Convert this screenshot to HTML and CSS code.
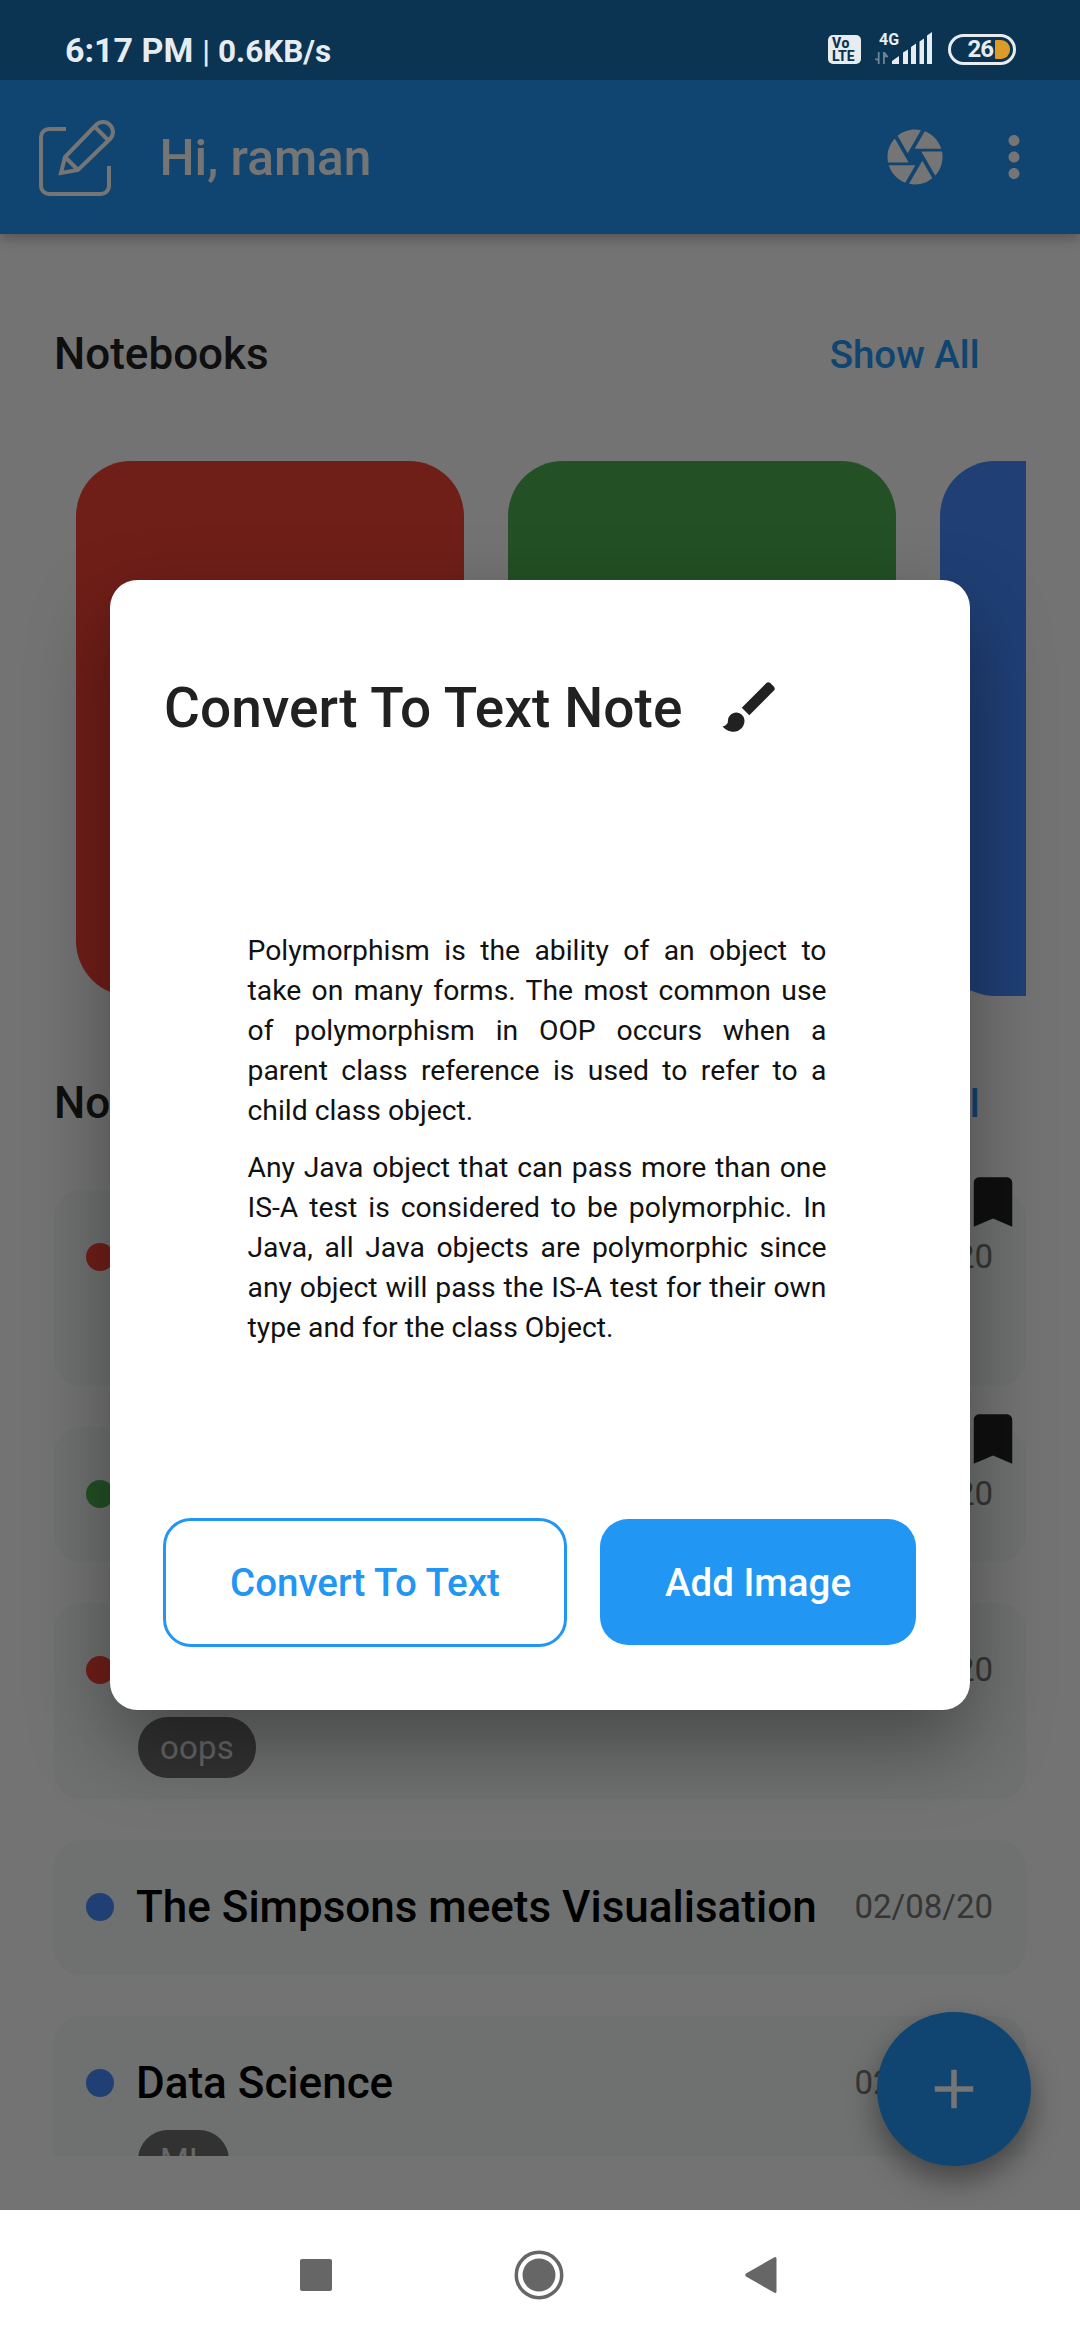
FILE: index.html
```html
<!DOCTYPE html>
<html lang="en">
<head>
<meta charset="utf-8">
<title>Notes</title>
<link rel="stylesheet" href="styles.css">
</head>
<body>
<div class="screen">
  <header class="status">
    <div class="status-left"><span class="clock">6:17 PM</span><span class="sep">|</span><span class="rate">0.6KB/s</span></div>
    <div class="status-right">
      <div class="volte"><span class="vo">Vo</span><span class="lte">LTE</span></div>
      <svg class="signal" width="58" height="34" viewBox="0 0 58 34">
        <text class="net" x="4" y="14">4G</text>
        <path class="arrows" d="M4.600 21v12h-1.800v-3.500L0 29v-1.500h2.800V21zM8 21h1.800l3.200 4v1.300h-3.200V33H8z"/>
        <path class="bars" d="M17 30l7-5v8h-7zM28 21.500l5-3V33h-5zM36 16l5-3.500V33h-5zM44.500 10.500l4.500-3V33h-4.500zM52 4.500l5-3.500V33h-5z"/>
      </svg>
      <div class="battery"><span class="pct">26</span><span class="charge"></span></div>
    </div>
  </header>

  <div class="appbar">
    <svg class="logo" width="78" height="78" viewBox="0 0 78 78">
      <path d="M28 11H11a8 8 0 0 0-8 8v49a8 8 0 0 0 8 8h52a8 8 0 0 0 8-8V48"/>
      <path d="M23 55l4-16L58 7a9.500 9.500 0 0 1 14 14L40 52zM27 39l13 13M57 9l13 13"/>
    </svg>
    <h1 class="greeting">Hi, raman</h1>
    <svg class="camera" width="66" height="66" viewBox="0 0 24 24"><path d="M9.400 10.500l4.770-8.260C13.470 2.090 12.750 2 12 2c-2.400 0-4.600.85-6.320 2.250l3.660 6.350.06-.1zM21.540 9c-.92-2.920-3.150-5.260-6-6.340L11.880 9h9.660zm.26 1h-7.490l.29.500 4.760 8.250C21 16.970 22 14.610 22 12c0-.69-.07-1.350-.2-2zM8.540 12l-3.900-6.750C3.010 7.030 2 9.390 2 12c0 .69.07 1.350.2 2h7.490l-1.150-2zm-6.080 3c.92 2.920 3.150 5.260 6 6.340L12.120 15H2.460zm11.270 0l-3.900 6.760c.7.150 1.420.24 2.170.24 2.400 0 4.600-.85 6.320-2.250l-3.660-6.350-.93 1.600z"/></svg>
    <svg class="more" width="66" height="66" viewBox="0 0 24 24"><path d="M12 8c1.100 0 2-.9 2-2s-.9-2-2-2-2 .9-2 2 .9 2 2 2zm0 2c-1.100 0-2 .9-2 2s.9 2 2 2 2-.9 2-2-.9-2-2-2zm0 6c-1.100 0-2 .9-2 2s.9 2 2 2 2-.9 2-2-.9-2-2-2z"/></svg>
  </div>

  <main class="content">
    <div class="section-head first"><h2>Notebooks</h2><a class="show-all">Show All</a></div>
    <div class="notebooks">
      <div class="book red"></div><div class="book green"></div><div class="book blue"></div>
    </div>
    <div class="section-head"><h2>Notes</h2><a class="show-all">Show All</a></div>
    <div class="notes">
      <article class="note tall">
        <svg class="bookmark" width="66" height="66" viewBox="0 0 24 24"><path d="M17 3H7c-1.100 0-1.990.9-1.990 2L5 21l7-3 7 3V5c0-1.100-.9-2-2-2z"/></svg>
        <div class="row"><i class="dot red"></i><h3></h3><time>02/08/20</time></div>
      </article>
      <article class="note">
        <svg class="bookmark" width="66" height="66" viewBox="0 0 24 24"><path d="M17 3H7c-1.100 0-1.990.9-1.990 2L5 21l7-3 7 3V5c0-1.100-.9-2-2-2z"/></svg>
        <div class="row"><i class="dot green"></i><h3></h3><time>02/08/20</time></div>
      </article>
      <article class="note tall">
        <div class="row"><i class="dot red"></i><h3></h3><time>02/08/20</time></div>
        <span class="tag">oops</span>
      </article>
      <article class="note">
        <div class="row"><i class="dot blue"></i><h3>The Simpsons meets Visualisation</h3><time>02/08/20</time></div>
      </article>
      <article class="note tall">
        <div class="row"><i class="dot blue"></i><h3>Data Science</h3><time>02/08/20</time></div>
        <span class="tag">ML</span>
      </article>
    </div>
    <button class="fab"><svg width="66" height="66" viewBox="0 0 24 24"><path d="M19 13h-6v6h-2v-6H5v-2h6V5h2v6h6v2z"/></svg></button>
  </main>

  <nav class="navbar">
    <svg width="32" height="32" viewBox="0 0 32 32"><rect width="32" height="32" rx="2"/></svg>
    <svg width="50" height="50" viewBox="0 0 50 50"><circle cx="25" cy="25" r="16.500"/><circle class="ring" cx="25" cy="25" r="22.700"/></svg>
    <svg width="32" height="38" viewBox="0 0 32 38"><path d="M1 17.500L29 1.400q2.500-1.200 2.500 1.300v32.600q0 2.500-2.500 1.300L1 20.500q-1.500-1.500 0-3z"/></svg>
  </nav>

  <div class="scrim">
    <section class="dialog">
      <div class="dialog-head">
        <h2>Convert To Text Note</h2>
        <svg width="66" height="66" viewBox="0 0 24 24"><path d="M7 14c-1.660 0-3 1.340-3 3 0 1.310-1.160 2-2 2 .92 1.220 2.490 2 4 2 2.210 0 4-1.790 4-4 0-1.660-1.340-3-3-3zm13.710-9.370l-1.340-1.340c-.39-.39-1.020-.39-1.410 0L9 12.250 11.750 15l8.960-8.960c.39-.39.39-1.020 0-1.410z"/></svg>
      </div>
      <div class="scan">
        <p>Polymorphism is the ability of an object to take on many forms. The most common use <span class="line">of polymorphism in OOP occurs when a</span> <span class="line">parent class reference is used to refer to a</span> child class object.</p>
        <p>Any Java object that can pass more than one IS-A test is considered to be polymorphic. In Java, all Java objects are polymorphic since any object will pass the IS-A test for their own type and for the class Object.</p>
      </div>
      <div class="actions">
        <button class="btn outline">Convert To Text</button>
        <button class="btn filled">Add Image</button>
      </div>
    </section>
  </div>
</div>
</body>
</html>
```
FILE: styles.css
```css
* { box-sizing: border-box; margin: 0; padding: 0; }
body { font-family: Roboto, "Liberation Sans", sans-serif; background: #fafafa; }
h1, h2, h3 { font-weight: 500; white-space: nowrap; }
svg { display: block; flex: none; }
button { border: 0; font-family: inherit; }

.screen { position: relative; width: 1080px; height: 2340px; display: flex; flex-direction: column; overflow: hidden; }

.status { position: relative; z-index: 3; height: 80px; padding: 0 64px 0 65px; display: flex; justify-content: space-between; align-items: flex-start; background: #0b3352; color: #e7ecf0; }
.status-left { display: flex; align-items: baseline; padding-top: 30px; line-height: 40px; }
.clock { font-size: 34px; font-weight: 700; }
.sep { font-size: 31px; font-weight: 500; margin: 0 8px 0 9px; }
.rate { font-size: 31.500px; font-weight: 700; }
.status-right { display: flex; align-items: flex-start; padding-top: 31px; }
.volte { width: 33px; height: 29px; margin: 4px 14px 0 0; padding: 2px 0 0 4px; border-radius: 5px; background: #e7ecf0; color: #0b3352; font: 800 14px/13px Roboto, sans-serif; display: flex; flex-direction: column; }
.vo { letter-spacing: .6px; }
.net { font: 700 16px Roboto, sans-serif; fill: #e7ecf0; }
.arrows { fill: #6d8497; }
.bars { fill: #e7ecf0; }
.battery { width: 68px; height: 31px; margin: 3px 0 0 15px; border: 3px solid #e7ecf0; border-radius: 16px; display: flex; align-items: center; justify-content: flex-end; padding-right: 3px; }
.pct { font-size: 24px; font-weight: 700; line-height: 25px; letter-spacing: -1px; margin-right: 2px; }
.charge { width: 15px; height: 19px; border-radius: 1px 9px 9px 1px; background: #dd9b27; }

.appbar { position: relative; z-index: 1; height: 154px; padding: 0 33px 0 38px; display: flex; align-items: center; background: #2196f3; box-shadow: 0 4px 12px rgba(0,0,0,.28); }
.logo { margin-right: 43.500px; fill: none; stroke: #fff; stroke-width: 4; }
.greeting { flex: 1; font-size: 49.500px; color: #fff; line-height: 60px; padding-top: 2px; }
.camera, .more { fill: #fff; }
.camera { margin-right: 33px; }

.content { position: relative; flex: 1; padding: 0 54px; overflow: hidden; background: #fafafa; }
.section-head { height: 100px; margin-top: 57px; padding-right: 46.500px; display: flex; align-items: center; justify-content: space-between; }
.section-head.first { margin-top: 70px; }
.section-head h2 { font-size: 44px; color: #212121; }
.show-all { font-size: 38.500px; font-weight: 500; color: #2196f3; }
.notebooks { height: 535px; margin-top: 57px; padding-left: 22px; display: flex; gap: 44px; overflow: hidden; }
.book { flex: none; width: 388px; border-radius: 55px; }
.red { background: #f44336; }
.green { background: #4caf50; }
.blue { background: #448aff; }

.notes { height: 1003px; padding-top: 37px; display: flex; flex-direction: column; gap: 41.500px; overflow: hidden; }
.note { position: relative; flex: none; height: 134.500px; padding: 0 33px 0 32px; border-radius: 27.500px; background: #f1f5f3; }
.note.tall { height: 195.500px; }
.row { height: 134px; display: flex; align-items: center; }
.dot { width: 28px; height: 28px; margin-right: 22px; border-radius: 50%; }
.note h3 { flex: 1; font-size: 44px; color: #000; }
.note time { font-size: 33px; line-height: 38px; padding-bottom: 1px; color: #757575; }
.bookmark { position: absolute; top: -21px; right: 0; fill: #212121; }
.tag { display: block; width: max-content; height: 61.500px; margin: -20.500px 0 0 52px; padding: 0 22px; border-radius: 30px; background: #6d6d6d; color: #e0e0e0; font-size: 33px; letter-spacing: .2px; line-height: 61px; }

.fab { position: absolute; right: 49px; bottom: 44px; width: 154px; height: 154px; border-radius: 50%; background: #2196f3; display: flex; align-items: center; justify-content: center; box-shadow: 0 14px 30px rgba(0,0,0,.4); }
.fab svg { fill: #fff; }

.navbar { position: relative; z-index: 3; height: 130px; padding: 0 303px 0 300px; display: flex; align-items: center; justify-content: space-between; background: #fff; fill: #666; }
.ring { fill: none; stroke: #666; stroke-width: 3.500; }

.scrim { position: absolute; z-index: 2; inset: 0; background: rgba(0,0,0,.54); padding: 579.500px 110px 0; }
.dialog { height: 1130.500px; padding: 94px 53px 0; border-radius: 27.500px; background: #fff; box-shadow: 0 34px 80px rgba(0,0,0,.36); }
.dialog-head { display: flex; align-items: center; height: 66px; padding-left: 1px; }
.dialog-head h2 { width: 553px; padding-top: 3px; font-size: 55px; letter-spacing: .07px; color: #212121; }
.dialog-head svg { fill: #212121; }
.scan { width: 579px; height: 570px; margin: 191px 0 0 84.500px; font-size: 28.300px; line-height: 40px; color: #111; text-align: justify; }
.scan p + p { margin-top: 17px; }
.line { display: inline-block; width: 100%; text-align-last: justify; white-space: nowrap; vertical-align: top; }
.actions { display: flex; align-items: center; height: 129px; margin-top: 17px; gap: 33px; }
.btn { border-radius: 28px; font-size: 38.500px; font-weight: 500; }
.outline { width: 404px; height: 129px; border: 3px solid #2196f3; background: #fff; color: #2196f3; }
.filled { width: 316px; height: 126px; background: #2196f3; color: #fff; }
```
